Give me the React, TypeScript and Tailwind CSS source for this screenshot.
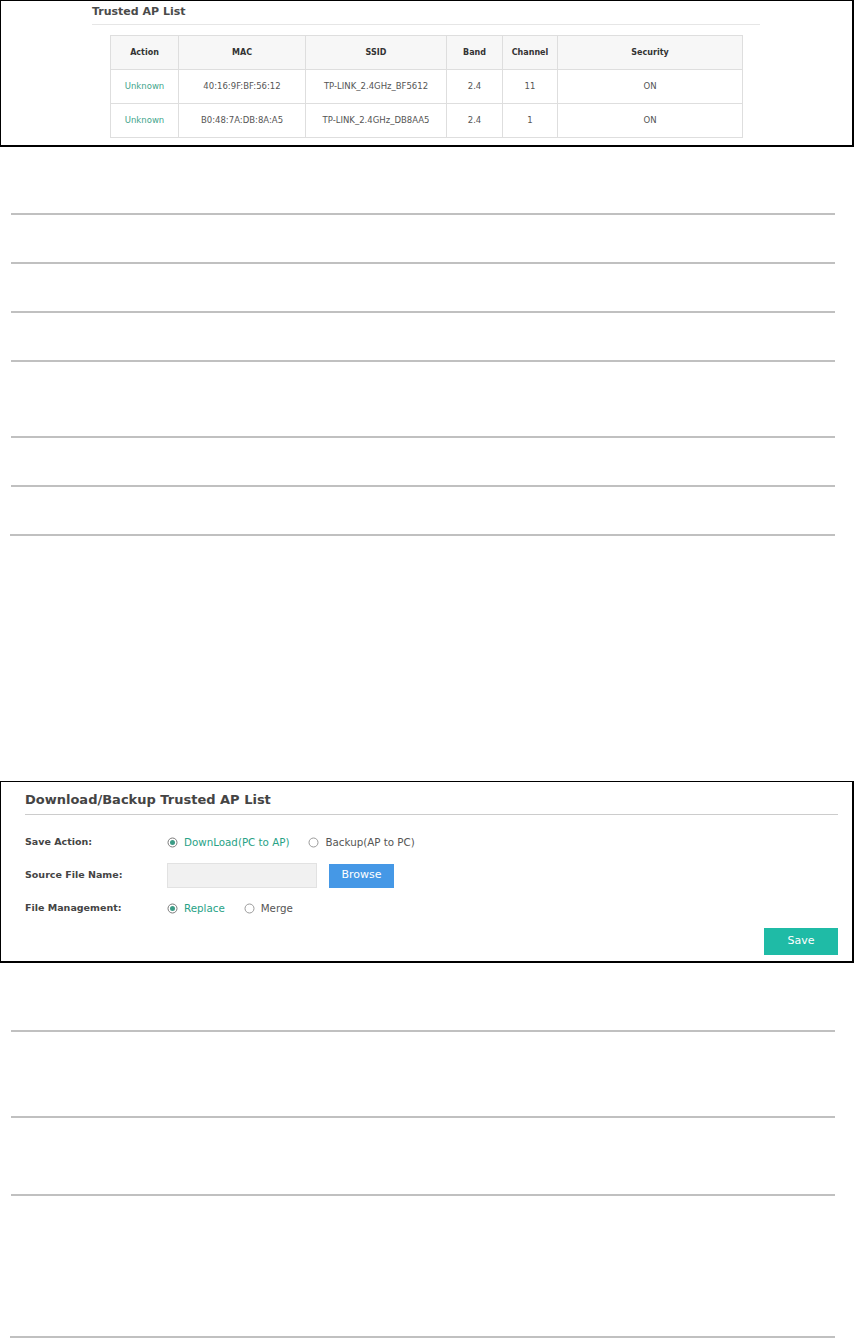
import { Fragment } from "react";
import type { ReactNode } from "react";

const font = { fontFamily: '"DejaVu Sans", Verdana, sans-serif' };

const rows = [
	{ mac: "40:16:9F:BF:56:12", ssid: "TP-LINK_2.4GHz_BF5612", band: "2.4", channel: "11", chClass: "text-[#6a4a9c]", security: "ON" },
	{ mac: "B0:48:7A:DB:8A:A5", ssid: "TP-LINK_2.4GHz_DB8AA5", band: "2.4", channel: "1", chClass: "text-[#3f6fb5]", security: "ON" },
];

function Cell({ children, head, className }: { children: ReactNode; head?: boolean; className?: string }) {
	return (
		<div
			className={`flex h-[34px] items-center justify-center border-l border-t border-[#dedede] ${
				head ? "bg-[#f7f7f7] text-[8px] font-bold text-[#333]" : "text-[8.5px] text-[#555]"
			} ${className ?? ""}`}
		>
			{children}
		</div>
	);
}

function Rule({ mt, wide }: { mt: string; wide?: boolean }) {
	return <div className={`${mt} ${wide ? "ml-[10px] w-[825px]" : "ml-[11px] w-[824px]"} h-[2px] bg-[#c0c0c0]`} />;
}

function Radio({ checked, label }: { checked?: boolean; label: string }) {
	return (
		<div className="mr-[19px] flex items-center">
			<svg width="11" height="11" viewBox="0 0 11 11" className="mr-[6px]">
				<circle cx="5.5" cy="5.5" r="4.5" fill="#fff" stroke={checked ? "#7a7a7a" : "#9a9a9a"} strokeWidth="1" />
				{checked && <circle cx="5.5" cy="5.5" r="2.5" fill="#3b9c86" />}
			</svg>
			<span className={`text-[10.3px] ${checked ? "text-[#27a286]" : "text-[#555]"}`}>{label}</span>
		</div>
	);
}

function FormRow({ label, children }: { label: string; children: ReactNode }) {
	return (
		<div className="flex h-[25px] items-center">
			<div className="w-[142px] text-[9.5px] font-bold text-[#444]">{label}</div>
			<div className="flex items-center">{children}</div>
		</div>
	);
}

export default function App() {
	return (
		<div className="w-[854px] h-[1338px] overflow-hidden bg-white" style={font}>
			<div className="h-[147px] border-t border-l border-r-2 border-b-2 border-black pl-[91px]">
				<div className="mt-[4px] w-[668px] border-b border-[#e6e6e6] pb-[5px] text-[11px] font-bold leading-[14px] text-[#4a4a4a]">
					Trusted AP List
				</div>
				<div className="ml-[18px] mt-[10px] grid w-[633px] grid-cols-[68px_127px_141px_56px_55px_185px] border-r border-b border-[#dedede]">
					<Cell head>Action</Cell>
					<Cell head>MAC</Cell>
					<Cell head>SSID</Cell>
					<Cell head>Band</Cell>
					<Cell head>Channel</Cell>
					<Cell head>Security</Cell>
					{rows.map((r) => (
						<Fragment key={r.mac}>
							<Cell className="!text-[#3fa58b]">Unknown</Cell>
							<Cell>{r.mac}</Cell>
							<Cell>{r.ssid}</Cell>
							<Cell>{r.band}</Cell>
							<Cell className={r.chClass}>{r.channel}</Cell>
							<Cell>{r.security}</Cell>
						</Fragment>
					))}
				</div>
			</div>

			<Rule mt="mt-[66px]" />
			<Rule mt="mt-[47px]" />
			<Rule mt="mt-[47px]" />
			<Rule mt="mt-[47px]" />
			<Rule mt="mt-[74px]" />
			<Rule mt="mt-[47px]" />
			<Rule mt="mt-[47px]" wide />

			<div className="mt-[245px] h-[182px] border-t border-l border-r-2 border-b-2 border-black pl-[24px] pr-[14px]">
				<div className="mt-[10px] border-b border-[#cccccc] pb-[6px] text-[13px] font-bold leading-[16px] text-[#444]">
					Download/Backup Trusted AP List
				</div>
				<div className="mt-[15px] flex flex-col gap-[8px]">
					<FormRow label="Save Action:">
						<Radio checked label="DownLoad(PC to AP)" />
						<Radio label="Backup(AP to PC)" />
					</FormRow>
					<FormRow label="Source File Name:">
						<div className="h-[25px] w-[150px] border border-[#e2e2e2] bg-[#f1f1f1]" />
						<button className="ml-[12px] h-[24px] w-[65px] bg-[#4598e6] text-[11px] text-white">Browse</button>
					</FormRow>
					<FormRow label="File Management:">
						<Radio checked label="Replace" />
						<Radio label="Merge" />
					</FormRow>
				</div>
				<div className="mt-[7px] flex justify-end">
					<button className="h-[27px] w-[74px] bg-[#1fbba6] text-[11px] text-white">Save</button>
				</div>
			</div>

			<Rule mt="mt-[67px]" />
			<Rule mt="mt-[84px]" />
			<Rule mt="mt-[76px]" />
			<Rule mt="mt-[140px]" wide />
		</div>
	);
}
